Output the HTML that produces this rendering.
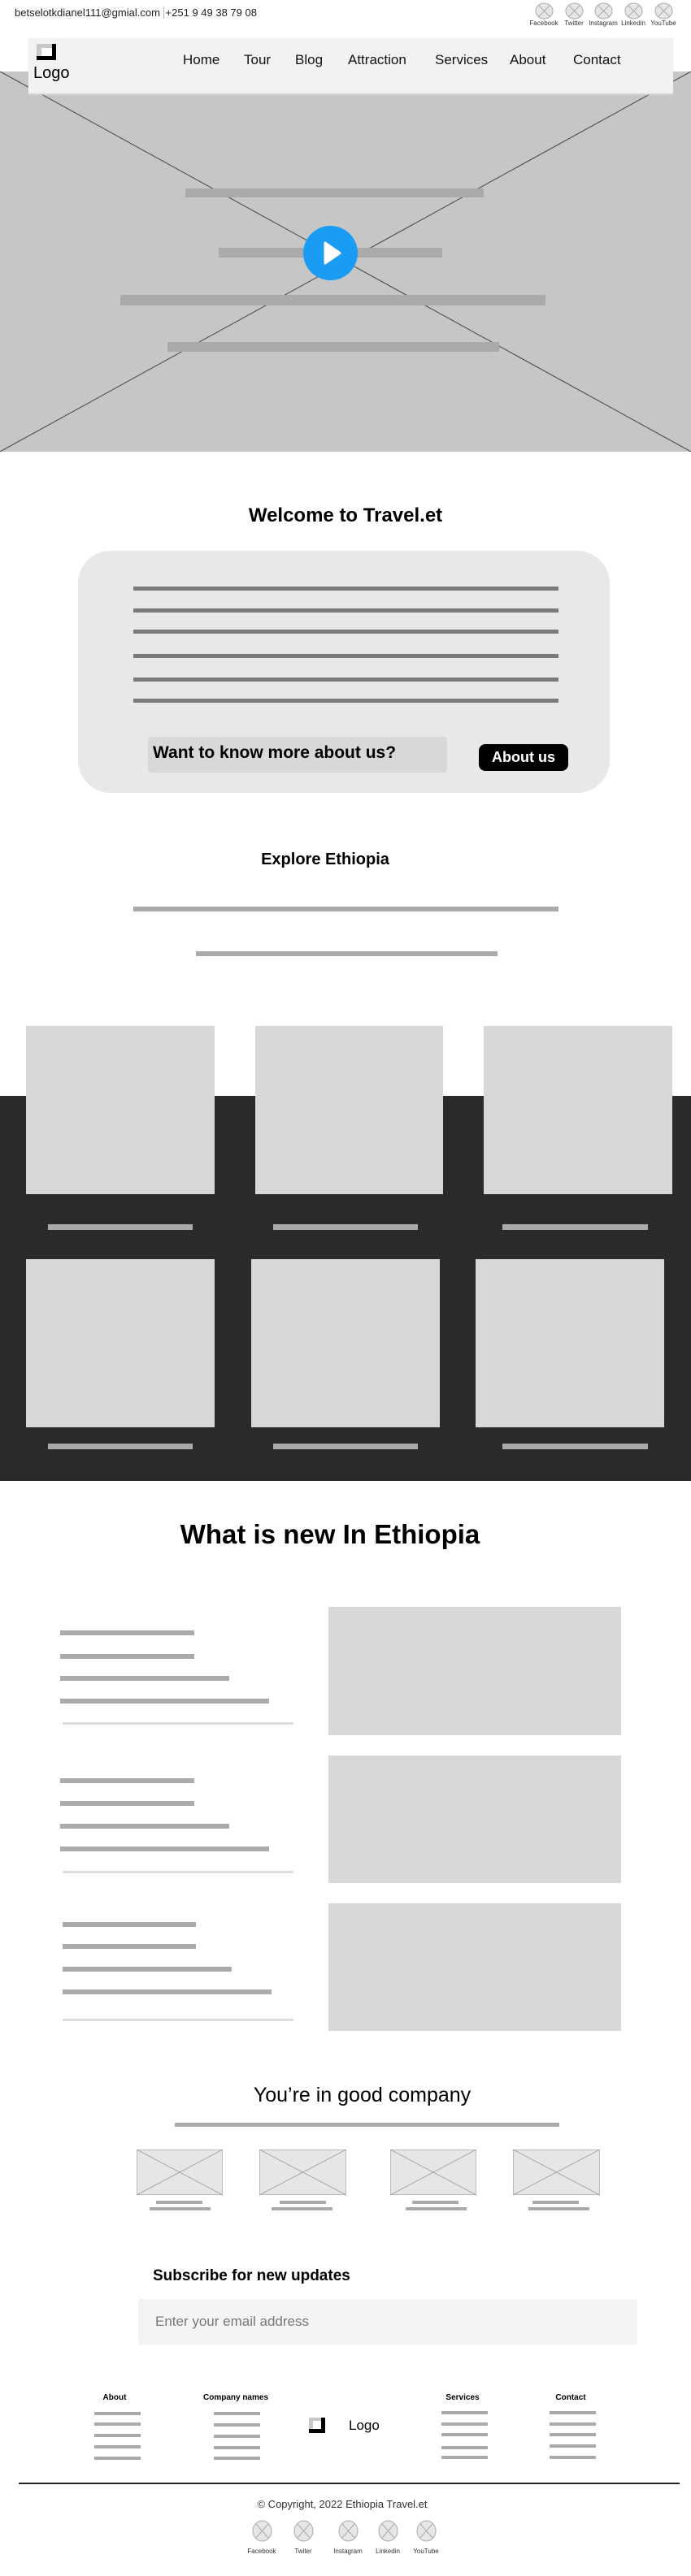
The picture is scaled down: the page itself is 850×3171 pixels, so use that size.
<!DOCTYPE html>
<html><head><meta charset="utf-8"><style>
*{margin:0;padding:0;box-sizing:border-box}
body{width:850px;height:3171px;position:relative;background:#fff;font-family:"Liberation Sans",Arial,sans-serif;color:#000;overflow:hidden}
.a{position:absolute}
.bar{position:absolute;background:#aaa}
.dl{position:absolute;height:5px;background:#7a7a7a}
.soc{position:absolute;width:24px;text-align:center}
.soc svg{display:block;margin:0 auto}
.soc span{display:block;font-size:8px;color:#333;white-space:nowrap;margin-left:-10px;margin-right:-10px}
.box{position:absolute;background:#d8d8d8}
.fh{position:absolute;font-size:10px;font-weight:bold;transform:translateX(-50%);white-space:nowrap}
.fl{position:absolute;width:57px;height:4px;background:#aaa}
.nav a{position:absolute;top:64px;font-size:17px;color:#111;text-decoration:none;white-space:nowrap}
</style></head><body>

<div class="a" style="left:18px;top:8px;font-size:13px;color:#222;white-space:nowrap">betselotkdianel111@gmial.com <span style="border-left:1px solid #bbb;padding-left:2px">+251 9 49 38 79 08</span></div>

<!-- top social -->
<div class="soc" style="left:657px;top:3px"><svg width="23" height="21" viewBox="0 0 23 21"><ellipse cx="11.5" cy="10.5" rx="10.5" ry="9.5" fill="#e6e6e6" stroke="#aaa"/><path d="M4.5 3.5L18.5 17.5M18.5 3.5L4.5 17.5" stroke="#999" stroke-width=".8"/></svg><span>Facebook</span></div>
<div class="soc" style="left:694px;top:3px"><svg width="23" height="21" viewBox="0 0 23 21"><ellipse cx="11.5" cy="10.5" rx="10.5" ry="9.5" fill="#e6e6e6" stroke="#aaa"/><path d="M4.5 3.5L18.5 17.5M18.5 3.5L4.5 17.5" stroke="#999" stroke-width=".8"/></svg><span>Twitter</span></div>
<div class="soc" style="left:730px;top:3px"><svg width="23" height="21" viewBox="0 0 23 21"><ellipse cx="11.5" cy="10.5" rx="10.5" ry="9.5" fill="#e6e6e6" stroke="#aaa"/><path d="M4.5 3.5L18.5 17.5M18.5 3.5L4.5 17.5" stroke="#999" stroke-width=".8"/></svg><span>Instagram</span></div>
<div class="soc" style="left:767px;top:3px"><svg width="23" height="21" viewBox="0 0 23 21"><ellipse cx="11.5" cy="10.5" rx="10.5" ry="9.5" fill="#e6e6e6" stroke="#aaa"/><path d="M4.5 3.5L18.5 17.5M18.5 3.5L4.5 17.5" stroke="#999" stroke-width=".8"/></svg><span>Linkedin</span></div>
<div class="soc" style="left:804px;top:3px"><svg width="23" height="21" viewBox="0 0 23 21"><ellipse cx="11.5" cy="10.5" rx="10.5" ry="9.5" fill="#e6e6e6" stroke="#aaa"/><path d="M4.5 3.5L18.5 17.5M18.5 3.5L4.5 17.5" stroke="#999" stroke-width=".8"/></svg><span>YouTube</span></div>

<!-- hero -->
<div class="a" style="left:0;top:88px;width:850px;height:468px;background:#c6c6c6">
<svg width="850" height="468" class="a" style="left:0;top:0"><path d="M0 0L850 468M850 0L0 468" stroke="#444" stroke-width="1"/></svg>
<div class="bar" style="left:228px;top:144px;width:367px;height:11px"></div>
<div class="bar" style="left:269px;top:217px;width:275px;height:12px"></div>
<div class="bar" style="left:148px;top:275px;width:523px;height:13px"></div>
<div class="bar" style="left:206px;top:333px;width:408px;height:12px"></div>
<div class="a" style="left:373px;top:190px;width:67px;height:67px;border-radius:50%;background:#1a9cf5"></div>
<svg class="a" style="left:373px;top:190px" width="67" height="67"><path d="M27 21L45 33.5L27 46Z" fill="#fff" stroke="#fff" stroke-width="3" stroke-linejoin="round"/></svg>
</div>

<!-- nav -->
<div class="a nav" style="left:35px;top:47px;width:793px;height:68px;background:#f2f2f2;box-shadow:0 2px 1px #d6d6d6">
<svg class="a" style="left:10px;top:7px" width="32" height="26"><rect x="0" y="0" width="24" height="20" fill="#000"/><rect x="0" y="0" width="19" height="15" fill="#c8c8c8"/><rect x="6" y="5" width="13" height="10" fill="#fff"/></svg>
<div class="a" style="left:6px;top:32px;font-size:20px">Logo</div>
<div style="position:absolute;left:-35px;top:-47px">
<a style="left:225px">Home</a><a style="left:300px">Tour</a><a style="left:363px">Blog</a><a style="left:428px">Attraction</a><a style="left:535px">Services</a><a style="left:627px">About</a><a style="left:705px">Contact</a>
</div></div>

<!-- welcome -->
<div class="a" style="left:0;width:850px;top:621px;text-align:center;font-size:24px;font-weight:bold">Welcome to Travel.et</div>
<div class="a" style="left:96px;top:678px;width:654px;height:298px;background:#e8e8e8;border-radius:40px"></div>
<div class="dl" style="left:164px;top:722px;width:523px"></div>
<div class="dl" style="left:164px;top:749px;width:523px"></div>
<div class="dl" style="left:164px;top:775px;width:523px"></div>
<div class="dl" style="left:164px;top:805px;width:523px"></div>
<div class="dl" style="left:164px;top:834px;width:523px"></div>
<div class="dl" style="left:164px;top:860px;width:523px"></div>
<div class="a" style="left:182px;top:907px;width:368px;height:44px;background:#d8d8d8;border-radius:4px"></div>
<div class="a" style="left:188px;top:915px;font-size:21px;font-weight:bold;white-space:nowrap">Want to know more about us?</div>
<div class="a" style="left:589px;top:916px;width:110px;height:33px;background:#000;border-radius:8px;color:#fff;font-size:18px;font-weight:bold;text-align:center;line-height:33px">About us</div>

<div class="a" style="left:0;width:800px;top:1047px;text-align:center;font-size:20px;font-weight:bold">Explore Ethiopia</div>
<div class="bar" style="left:164px;top:1116px;width:523px;height:6px"></div>
<div class="bar" style="left:241px;top:1171px;width:371px;height:6px"></div>

<!-- dark grid -->
<div class="a" style="left:0;top:1349px;width:850px;height:474px;background:#2a2a2a"></div>
<div class="box" style="left:32px;top:1263px;width:232px;height:207px"></div>
<div class="box" style="left:314px;top:1263px;width:231px;height:207px"></div>
<div class="box" style="left:595px;top:1263px;width:232px;height:207px"></div>
<div class="bar" style="left:59px;top:1507px;width:178px;height:7px"></div>
<div class="bar" style="left:336px;top:1507px;width:178px;height:7px"></div>
<div class="bar" style="left:618px;top:1507px;width:179px;height:7px"></div>
<div class="box" style="left:32px;top:1550px;width:232px;height:207px"></div>
<div class="box" style="left:309px;top:1550px;width:232px;height:207px"></div>
<div class="box" style="left:585px;top:1550px;width:232px;height:207px"></div>
<div class="bar" style="left:59px;top:1777px;width:178px;height:7px"></div>
<div class="bar" style="left:336px;top:1777px;width:178px;height:7px"></div>
<div class="bar" style="left:618px;top:1777px;width:179px;height:7px"></div>

<!-- what is new -->
<div class="a" style="left:0;width:812px;top:1870px;text-align:center;font-size:33px;font-weight:bold">What is new In Ethiopia</div>
<div class="box" style="left:404px;top:1978px;width:360px;height:158px"></div>
<div class="box" style="left:404px;top:2161px;width:360px;height:157px"></div>
<div class="box" style="left:404px;top:2343px;width:360px;height:157px"></div>
<div class="bar" style="left:74px;top:2007px;width:165px;height:6px"></div>
<div class="bar" style="left:74px;top:2036px;width:165px;height:6px"></div>
<div class="bar" style="left:74px;top:2063px;width:208px;height:6px"></div>
<div class="bar" style="left:74px;top:2091px;width:257px;height:6px"></div>
<div class="a" style="left:77px;top:2120px;width:284px;height:3px;background:#ddd"></div>
<div class="bar" style="left:74px;top:2189px;width:165px;height:6px"></div>
<div class="bar" style="left:74px;top:2217px;width:165px;height:6px"></div>
<div class="bar" style="left:74px;top:2245px;width:208px;height:6px"></div>
<div class="bar" style="left:74px;top:2273px;width:257px;height:6px"></div>
<div class="a" style="left:77px;top:2303px;width:284px;height:3px;background:#ddd"></div>
<div class="bar" style="left:77px;top:2366px;width:164px;height:6px"></div>
<div class="bar" style="left:77px;top:2393px;width:164px;height:6px"></div>
<div class="bar" style="left:77px;top:2421px;width:208px;height:6px"></div>
<div class="bar" style="left:77px;top:2449px;width:257px;height:6px"></div>
<div class="a" style="left:77px;top:2485px;width:284px;height:3px;background:#ddd"></div>

<!-- good company -->
<div class="a" style="left:0;width:891px;top:2565px;text-align:center;font-size:25px">You’re in good company</div>
<div class="bar" style="left:215px;top:2613px;width:473px;height:5px"></div>
<svg class="a" style="left:0;top:2646px" width="850" height="80">
<g fill="#e6e6e6" stroke="#bbb" stroke-width="1">
<rect x="168.5" y=".5" width="105" height="55"/><rect x="319.5" y=".5" width="106" height="55"/><rect x="480.5" y=".5" width="105" height="55"/><rect x="631.5" y=".5" width="106" height="55"/></g>
<g stroke="#999" stroke-width=".8"><path d="M168 0L274 56M274 0L168 56M319 0L426 56M426 0L319 56M480 0L586 56M586 0L480 56M631 0L738 56M738 0L631 56"/></g>
<g fill="#aaa"><rect x="192" y="63" width="57" height="4"/><rect x="184" y="71" width="75" height="4"/><rect x="344" y="63" width="57" height="4"/><rect x="334" y="71" width="75" height="4"/><rect x="507" y="63" width="57" height="4"/><rect x="499" y="71" width="75" height="4"/><rect x="655" y="63" width="57" height="4"/><rect x="650" y="71" width="75" height="4"/></g>
</svg>

<div class="a" style="left:188px;top:2791px;font-size:19px;font-weight:bold;white-space:nowrap">Subscribe for new updates</div>
<div class="a" style="left:170px;top:2830px;width:614px;height:56px;background:#f4f4f4"></div>
<div class="a" style="left:191px;top:2848px;font-size:17px;color:#777">Enter your email address</div>

<!-- footer -->
<div class="fh" style="left:141px;top:2946px">About</div>
<div class="fh" style="left:290px;top:2946px">Company names</div>
<div class="fh" style="left:569px;top:2946px">Services</div>
<div class="fh" style="left:702px;top:2946px">Contact</div>
<div class="fl" style="left:116px;top:2969px"></div><div class="fl" style="left:116px;top:2982px"></div><div class="fl" style="left:116px;top:2996px"></div><div class="fl" style="left:116px;top:3010px"></div><div class="fl" style="left:116px;top:3024px"></div>
<div class="fl" style="left:263px;top:2969px"></div><div class="fl" style="left:263px;top:2983px"></div><div class="fl" style="left:263px;top:2997px"></div><div class="fl" style="left:263px;top:3011px"></div><div class="fl" style="left:263px;top:3024px"></div>
<div class="fl" style="left:543px;top:2968px"></div><div class="fl" style="left:543px;top:2982px"></div><div class="fl" style="left:543px;top:2995px"></div><div class="fl" style="left:543px;top:3011px"></div><div class="fl" style="left:543px;top:3023px"></div>
<div class="fl" style="left:676px;top:2968px"></div><div class="fl" style="left:676px;top:2982px"></div><div class="fl" style="left:676px;top:2995px"></div><div class="fl" style="left:676px;top:3009px"></div><div class="fl" style="left:676px;top:3023px"></div>
<svg class="a" style="left:380px;top:2976px" width="20" height="19"><rect x="0" y="0" width="20" height="19" fill="#000"/><rect x="0" y="0" width="15" height="14" fill="#c8c8c8"/><rect x="5" y="4" width="10" height="10" fill="#fff"/></svg>
<div class="a" style="left:429px;top:2976px;font-size:17px">Logo</div>
<div class="a" style="left:23px;top:3056px;width:813px;height:2px;background:#222"></div>
<div class="a" style="left:0;width:842px;top:3075px;text-align:center;font-size:13px;color:#333">© Copyright, 2022 Ethiopia Travel.et</div>

<div class="soc" style="left:310px;top:3102px"><svg width="25" height="27" viewBox="0 0 25 27"><ellipse cx="12.5" cy="13.5" rx="11.5" ry="12.5" fill="#e6e6e6" stroke="#aaa"/><path d="M5 5L20 22M20 5L5 22" stroke="#999" stroke-width=".8"/></svg><span style="margin-top:7px">Facebook</span></div>
<div class="soc" style="left:361px;top:3102px"><svg width="25" height="27" viewBox="0 0 25 27"><ellipse cx="12.5" cy="13.5" rx="11.5" ry="12.5" fill="#e6e6e6" stroke="#aaa"/><path d="M5 5L20 22M20 5L5 22" stroke="#999" stroke-width=".8"/></svg><span style="margin-top:7px">Twiter</span></div>
<div class="soc" style="left:416px;top:3102px"><svg width="25" height="27" viewBox="0 0 25 27"><ellipse cx="12.5" cy="13.5" rx="11.5" ry="12.5" fill="#e6e6e6" stroke="#aaa"/><path d="M5 5L20 22M20 5L5 22" stroke="#999" stroke-width=".8"/></svg><span style="margin-top:7px">Instagram</span></div>
<div class="soc" style="left:465px;top:3102px"><svg width="25" height="27" viewBox="0 0 25 27"><ellipse cx="12.5" cy="13.5" rx="11.5" ry="12.5" fill="#e6e6e6" stroke="#aaa"/><path d="M5 5L20 22M20 5L5 22" stroke="#999" stroke-width=".8"/></svg><span style="margin-top:7px">Linkedin</span></div>
<div class="soc" style="left:512px;top:3102px"><svg width="25" height="27" viewBox="0 0 25 27"><ellipse cx="12.5" cy="13.5" rx="11.5" ry="12.5" fill="#e6e6e6" stroke="#aaa"/><path d="M5 5L20 22M20 5L5 22" stroke="#999" stroke-width=".8"/></svg><span style="margin-top:7px">YouTube</span></div>

</body></html>
